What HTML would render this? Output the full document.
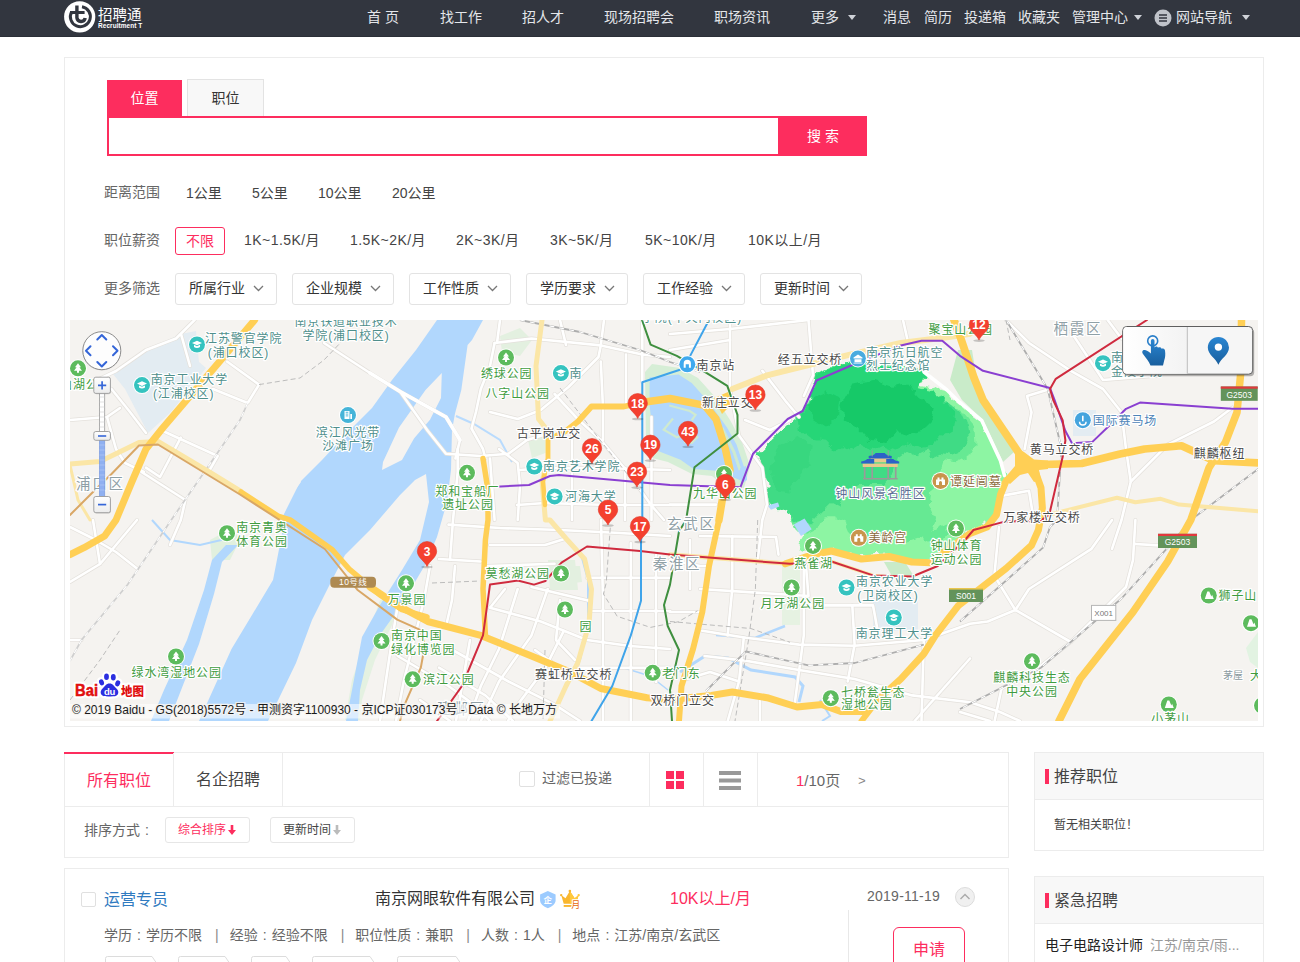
<!DOCTYPE html>
<html lang="zh-CN">
<head>
<meta charset="utf-8">
<title>招聘通 - 地图找工作</title>
<style>
*{box-sizing:border-box;margin:0;padding:0}
html,body{width:1300px;height:962px;overflow:hidden;background:#fff}
body{font-family:"Liberation Sans","Noto Sans CJK SC",sans-serif;font-size:14px;color:#333;position:relative}
.abs{position:absolute;white-space:nowrap}
#hd{position:absolute;left:0;top:0;width:1300px;height:37px;background:#32363f;border-bottom:1px solid #2b2f37}
#hd .n{position:absolute;top:0;height:35px;line-height:35px;color:#e4e6ea;font-size:14px;white-space:nowrap}
.tri{position:absolute;width:0;height:0;border-left:4px solid transparent;border-right:4px solid transparent;border-top:5px solid #cfd2d8}
#sp{position:absolute;left:64px;top:57px;width:1200px;height:670px;border:1px solid #ececec;background:#fff}
.lbl{position:absolute;font-size:14px;color:#666;line-height:20px;white-space:nowrap}
.opt{position:absolute;font-size:14px;color:#444;line-height:20px;white-space:nowrap}
.dd{position:absolute;top:273px;width:102px;height:32px;border:1px solid #e3e3e3;border-radius:3px;font-size:14px;color:#333;line-height:29px;padding-left:13px;white-space:nowrap;background:#fff}
.dd svg{position:absolute;left:77px;top:11px}
.panel{position:absolute;border:1px solid #ececec;background:#fff}
</style>
</head>
<body>
<div id="hd">
  <svg class="abs" style="left:63px;top:0px" width="34" height="34" viewBox="0 0 34 34">
    <circle cx="16.700" cy="16.900" r="15.600" fill="#fff"/>
    <path d="M19 6.800 A10 10 0 1 1 8.700 11.700" fill="none" stroke="#32363f" stroke-width="3"/>
    <path d="M13.900 5.600 V17.800 A4.200 4.200 0 0 0 22.200 18" fill="none" stroke="#32363f" stroke-width="3.400"/>
    <path d="M7 12.500 H21.600" fill="none" stroke="#32363f" stroke-width="3"/>
  </svg>
  <div class="abs" style="left:98px;top:4px;font-size:14.500px;line-height:20px;color:#fff;letter-spacing:0px;font-weight:400;font-family:'Noto Sans CJK SC',sans-serif">招聘通</div>
  <div class="abs" style="left:98px;top:21.500px;font-size:6.500px;line-height:8px;color:#fff;font-weight:bold;letter-spacing:.05px">Recruitment T</div>
  <div class="n" style="left:367px">首 页</div>
  <div class="n" style="left:440px">找工作</div>
  <div class="n" style="left:522px">招人才</div>
  <div class="n" style="left:604px">现场招聘会</div>
  <div class="n" style="left:714px">职场资讯</div>
  <div class="n" style="left:811px">更多</div>
  <div class="tri" style="left:848px;top:15px"></div>
  <div class="n" style="left:883px">消息</div>
  <div class="n" style="left:924px">简历</div>
  <div class="n" style="left:964px">投递箱</div>
  <div class="n" style="left:1018px">收藏夹</div>
  <div class="n" style="left:1072px">管理中心</div>
  <div class="tri" style="left:1134px;top:15px"></div>
  <svg class="abs" style="left:1154px;top:9px" width="18" height="18" viewBox="0 0 18 18"><circle cx="9" cy="9" r="8.5" fill="#c0c3ca"/><path d="M5 6h8M5 9h8M5 12h8" stroke="#32363f" stroke-width="1.6"/></svg>
  <div class="n" style="left:1176px">网站导航</div>
  <div class="tri" style="left:1242px;top:15px"></div>
</div>

<div id="sp"></div>
<div class="abs" style="left:107px;top:80px;width:75px;height:36px;background:#fd2d5e;color:#fff;font-size:14px;line-height:36px;text-align:center">位置</div>
<div class="abs" style="left:187px;top:79px;width:77px;height:37px;background:#f8f8f8;border:1px solid #e3e3e3;border-bottom:none;color:#333;font-size:14px;line-height:37px;text-align:center">职位</div>
<div class="abs" style="left:107px;top:116px;width:673px;height:40px;border:2px solid #fd2d5e;background:#fff"></div>
<div class="abs" style="left:779px;top:116px;width:88px;height:40px;background:#fd2d5e;color:#fff;font-size:14px;line-height:41px;text-align:center;padding-left:0">搜 索</div>

<div class="lbl" style="left:104px;top:182px">距离范围</div>
<div class="opt" style="left:186px;top:183px">1公里</div>
<div class="opt" style="left:252px;top:183px">5公里</div>
<div class="opt" style="left:318px;top:183px">10公里</div>
<div class="opt" style="left:392px;top:183px">20公里</div>

<div class="lbl" style="left:104px;top:230px">职位薪资</div>
<div class="abs" style="left:175px;top:227px;width:50px;height:28px;border:1px solid #fd2d5e;border-radius:3px;color:#fd2d5e;font-size:14px;line-height:26px;text-align:center">不限</div>
<div class="opt" style="left:244px;top:230px;letter-spacing:.45px">1K~1.5K/月</div>
<div class="opt" style="left:350px;top:230px;letter-spacing:.45px">1.5K~2K/月</div>
<div class="opt" style="left:456px;top:230px;letter-spacing:.45px">2K~3K/月</div>
<div class="opt" style="left:550px;top:230px;letter-spacing:.45px">3K~5K/月</div>
<div class="opt" style="left:645px;top:230px;letter-spacing:.45px">5K~10K/月</div>
<div class="opt" style="left:748px;top:230px;letter-spacing:.45px">10K以上/月</div>

<div class="lbl" style="left:104px;top:278px">更多筛选</div>
<div class="dd" style="left:175px">所属行业<svg width="11" height="7" viewBox="0 0 11 7"><path d="M1 1l4.5 4.5L10 1" fill="none" stroke="#777" stroke-width="1.3"/></svg></div>
<div class="dd" style="left:292px">企业规模<svg width="11" height="7" viewBox="0 0 11 7"><path d="M1 1l4.5 4.5L10 1" fill="none" stroke="#777" stroke-width="1.3"/></svg></div>
<div class="dd" style="left:409px">工作性质<svg width="11" height="7" viewBox="0 0 11 7"><path d="M1 1l4.5 4.5L10 1" fill="none" stroke="#777" stroke-width="1.3"/></svg></div>
<div class="dd" style="left:526px">学历要求<svg width="11" height="7" viewBox="0 0 11 7"><path d="M1 1l4.5 4.5L10 1" fill="none" stroke="#777" stroke-width="1.3"/></svg></div>
<div class="dd" style="left:643px">工作经验<svg width="11" height="7" viewBox="0 0 11 7"><path d="M1 1l4.5 4.5L10 1" fill="none" stroke="#777" stroke-width="1.3"/></svg></div>
<div class="dd" style="left:760px">更新时间<svg width="11" height="7" viewBox="0 0 11 7"><path d="M1 1l4.5 4.5L10 1" fill="none" stroke="#777" stroke-width="1.3"/></svg></div>
<svg class="abs" style="left:70px;top:320px" width="1188" height="401" viewBox="70 320 1188 401" font-family="'Liberation Sans','Noto Sans CJK SC',sans-serif">
<defs>
<style>
.wc{fill:none;stroke:#e4e1dc;stroke-width:4;stroke-linejoin:round;stroke-linecap:round}
.w{fill:none;stroke:#fff;stroke-width:2.6;stroke-linejoin:round;stroke-linecap:round}
.w2{fill:none;stroke:#fff;stroke-width:3.6;stroke-linejoin:round;stroke-linecap:round}
.w1{fill:none;stroke:#fff;stroke-width:1.8;stroke-linejoin:round;stroke-linecap:round}
.y{fill:none;stroke:#ffcf55;stroke-linejoin:round;stroke-linecap:round}
.yc{fill:none;stroke:#f3b94a;stroke-linejoin:round;stroke-linecap:round;opacity:.0}
.py{fill:none;stroke:#fbe6a6;stroke-linejoin:round;stroke-linecap:round}
.m{fill:none;stroke-width:2;stroke-linejoin:round;stroke-linecap:round}
.rl{fill:none;stroke:#adadad;stroke-width:1.8;stroke-linejoin:round}
.bd{fill:none;stroke:#b5b5b5;stroke-width:.9;stroke-dasharray:5 3}
.rd{fill:none;stroke:#fff;stroke-width:1.1;stroke-dasharray:5 5;stroke-linejoin:round}
.t{font-size:12px;letter-spacing:.9px;stroke:#fff;stroke-width:2.4px;paint-order:stroke;stroke-linejoin:round}
.tg{fill:#3f9c3f}.ts{fill:#4f8f8c}.tk{fill:#4a4a4a}.tb{fill:#4d84b8}.tbr{fill:#8a6a3c}.tp{fill:#5d6f95}
.td{font-size:14.5px;letter-spacing:1.7px;fill:#8fa0a6;stroke:#fff;stroke-width:2.4px;paint-order:stroke}
.cw{fill:#b1d7fd}
</style>
<linearGradient id="gbtn" x1="0" y1="0" x2="0" y2="1"><stop offset="0" stop-color="#fff"/><stop offset="1" stop-color="#ececec"/></linearGradient>
<linearGradient id="gicon" x1="0" y1="0" x2="0" y2="1"><stop offset="0" stop-color="#2a86d2"/><stop offset="1" stop-color="#195f9e"/></linearGradient>
<g id="tree"><circle r="9" fill="#fff"/><circle r="8" fill="#5dbb5d"/><path d="M0-5l3 4h-1.600l2.600 3.500h-3v2h-2v-2h-3l2.600-3.500h-1.600z" fill="#fff"/></g>
<g id="mtn"><circle r="9" fill="#fff"/><circle r="8" fill="#5dbb5d"/><path d="M-4 3.500l2.500-7.500h2l2 5 .8-1.800 1.700 4.300z" fill="#fff"/></g>
<g id="sch"><circle r="9" fill="#fff"/><circle r="8" fill="#35c3bf"/><path d="M0-3.800l5 2.300-5 2.300-5-2.300zM-3 .300l3 1.400 3-1.400v2.200q-3 2-6 0z" fill="#fff"/></g>
<g id="stn"><circle r="9" fill="#fff"/><circle r="8" fill="#3fa9ee"/><path d="M0-4.500a3.600 3.600 0 0 1 3.600 3.600v4.400h-2v-3.500h-3.200v3.500h-2v-4.400a3.600 3.600 0 0 1 3.600-3.600z" fill="#fff"/></g>
<g id="mus"><circle r="9" fill="#fff"/><circle r="8" fill="#49abdf"/><path d="M-4.500-1l4.500-3 4.500 3v1h-9zM-3.500.800h7v3h-7zM-4.500 4.200h9v.800h-9z" fill="#fff"/></g>
<g id="hist"><circle r="9" fill="#fff"/><circle r="8" fill="#c8954c"/><path d="M-4.500 4v-5.500h1.500v-2h2v2h2v-2h2v2h1.500v5.500h-3v-2.500a1.500 1.500 0 0 0-3 0v2.500z" fill="#fff"/></g>
<g id="bld"><circle r="9" fill="#fff"/><circle r="8" fill="#46b4d8"/><path d="M-3.500-4h5v8h-5zM2.300-1h1.700v5h-1.700z" fill="#fff"/><path d="M-2.300-2.800h2.600M-2.300-1h2.600M-2.300.800h2.600" stroke="#46b4d8" stroke-width=".9"/></g>
<g id="horse"><circle r="9" fill="#fff"/><circle r="8" fill="#44a4de"/><path d="M-4 1.500a4 4 0 0 0 8 0h-1.500a2.500 2.500 0 0 1-5 0zM-.8-4.500h1.600v5.500h-1.600z" fill="#fff"/></g>
<g id="mk"><ellipse cx="0" cy="1" rx="5.800" ry="1.300" fill="#000" opacity=".2"/><path d="M0 .5C-2.200-5-9.700-8.300-9.700-14.800a9.700 9.700 0 0 1 19.400 0C9.700-8.300 2.200-5 0 .5z" fill="#f4402f" stroke="#e03a2c" stroke-width=".6"/></g>
</defs>
<rect x="70" y="320" width="1188" height="401" fill="#f5f3f0"/>
<path d="M113 374 L146 350 L181 334 L196 331 L199 362 L206 368 L171 412 L148 433 L137 412 L125 389Z" fill="#e3ecf2" />
<path d="M873 598 L918 598 L918 631 L873 631Z" fill="#e3ecf2" />
<path d="M1073 410 L1096 410 L1096 436 L1073 436Z" fill="#e3ecf2" />
<path d="M958 350 L972 350 L980 400 L1014 452 L1003 462 L983 420 L962 400 L950 380Z" fill="#c9ebc9" />
<path d="M380 600 L400 596 L392 625 L375 660 L362 700 L360 720 L345 720 L352 680 L366 640Z" fill="#e4f1e1" />
<path d="M210 540 L232 528 L240 540 L230 560 L212 560Z" fill="#e1f0de" />
<path d="M500 336 L520 328 L532 340 L520 356 L502 352Z" fill="#e3f0e0" />
<path d="M528 440 L545 436 L548 452 L532 458Z" fill="#e3f0e0" />
<path d="M548 560 L575 560 L578 590 L550 590Z" fill="#e3f0e0" />
<path d="M782 565 L800 565 L800 625 L782 625Z" fill="#e6f2e2" />
<path d="M884 562 L905 562 L915 578 L893 578Z" fill="#c9ebc9" />
<path d="M1246 648 L1258 632 L1258 668 L1250 662Z" fill="#e2f3e2" />
<path d="M437 320 L483 320 L472 340 L467.6 345 L461.3 390 L455 413.5 L452 430 L451 470 L447 502 L437 537 L425 565 L415 582 L400 607 L380 635 L367 660 L360 690 L358 721 L346 721 L352 690 L362 637 L380 605 L402 570 L420 540 L429 502 L426 474 L415 480 L400 495 L370 530 L345 555 L332 580 L312 620 L296 663 L268 721 L199 721 L231.5 649 L252 615 L273 580 L282 534 L281 520 L300 482 L322 460 L350 430 L372 408 L392 380 L416 350Z" fill="#b1d7fd" />
<path d="M441.8 373 L441 398 L430 419.8 L414 438.5 L402 460 L382 470 L383 462 L399 427.6 L425.5 390Z" fill="#f5f3f0" />
<path d="M299 476 L301 482 L288 500 L276 516 L276 510 L286 492Z" fill="#f5f3f0" />
<path d="M238 545 L222 562 L214 594 L199 644 L178 698 L169 721 L151 721 L164 690 L187 640 L204 590 L212 560 L226 545Z" fill="#b1d7fd" />
<path d="M152 520 L170 540 L200 545 L230 538" fill="none" stroke="#b1d7fd" stroke-width="2"/>
<path d="M645 372 L652 364 L680 368 L698 378 L716 398 L730 420 L742 442 L750 466 L744 488 L722 484 L712 476 L692 474 L668 462 L652 458 L646 444Z" fill="#d6eed6" />
<path d="M649.6 377.4 L678.6 374.6 L691.7 383 L708.5 401.7 L717.9 414.8 L727.3 427.9 L736.6 444.7 L744 467 L740.3 480.3 L731 476.5 L719.8 471 L693.6 469 L680.5 459.7 L656.2 450.3 L652.4 429.8 L649.6 405.5Z" fill="#b1d7fd" />
<path d="M669.3 405.5 L689.8 411 L695.5 414.8 L691.7 420.4" fill="none" stroke="#cfeacf" stroke-width="2.2"/>
<path d="M673 418.5 L663.7 429.8 L676.8 437.3 L691.7 431.6 L697.3 437.3 L691.7 442.9 L684.2 441.9" fill="none" stroke="#cfeacf" stroke-width="2.2"/>
<path d="M722 428 L734 452 L740 470" fill="none" stroke="#cfeacf" stroke-width="3"/>
<path d="M566 566 L580 566 L582 582 L566 584Z" fill="#e3f0e0" />
<path d="M566 540 L582 558 L588 580 L588 625 L580 660 L572 680" fill="none" stroke="#b1d7fd" stroke-width="2"/>
<path d="M785 626 L755 638 L716 635" fill="none" stroke="#b1d7fd" stroke-width="2.5"/>
<path d="M680 672 L705 656 L728 658 L751 670 L795 677 L803 686 L799 702" fill="none" stroke="#b1d7fd" stroke-width="3"/>
<path d="M820 700 L830 716 L822 721" fill="none" stroke="#b1d7fd" stroke-width="2"/>
<path d="M624 668 L650 676 L668 690" fill="none" stroke="#b1d7fd" stroke-width="1.5"/>
<path d="M456 416 L474 424 L500 440 L512 462" fill="none" stroke="#b9dbfd" stroke-width="2"/>
<filter id="rough" x="-5%" y="-5%" width="110%" height="110%"><feTurbulence type="fractalNoise" baseFrequency="0.11" numOctaves="2" seed="7" result="n"/><feDisplacementMap in="SourceGraphic" in2="n" scale="9" xChannelSelector="R" yChannelSelector="G"/></filter>
<g filter="url(#rough)">
<path d="M852.36 361.475 L873.875 364.822 L916.907 367.213 L928.86 373.906 L919.297 385.859 L931.25 388.25 L940.813 385.859 L950.375 397.813 L962.328 407.375 L981.454 421.719 L991.016 438.453 L1000.58 462.36 L1005.36 474.313 L1000.58 493.438 L993.407 514.953 L988.625 522.125 L967.11 531.688 L955.157 541.25 L933.641 557.985 L921.688 562.766 L888.219 553.203 L854.75 555.594 L833.235 549.617 L809.328 553.203 L797.375 548.422 L804.547 536.469 L794.984 526.907 L791.399 517.344 L780.641 510.172 L768.688 503 L767.492 483.875 L761.516 464.75 L756.734 455.188 L773.469 438.453 L794.984 419.328 L809.328 400.203 L816.5 372.711 L835.625 365.539Z" fill="#8df5a3" />
<path d="M816.5 372.711 L835.625 365.539 L852.36 361.475 L873.875 364.822 L916.907 367.213 L926.469 375.102 L918.102 388.25 L931.25 390.641 L947.985 401.399 L962.328 412.156 L974.282 426.5 L975.477 445.625 L969.5 455.188 L955.157 462.36 L943.203 459.969 L938.422 474.313 L931.25 483.875 L928.86 503 L936.032 517.344 L931.25 531.688 L945.594 524.516 L950.375 534.078 L936.032 543.641 L921.688 536.469 L907.344 541.25 L888.219 536.469 L873.875 541.25 L852.36 538.86 L845.188 522.125 L835.625 517.344 L823.672 517.344 L818.891 526.907 L804.547 534.078 L794.984 525.711 L791.399 517.344 L780.641 510.172 L768.688 503 L767.492 483.875 L761.516 464.75 L756.734 455.188 L773.469 438.453 L794.984 419.328 L809.328 402.594Z" fill="#66e993" />
<path d="M816.5 372.711 L835.625 365.539 L852.36 361.475 L873.875 364.822 L916.907 367.213 L926.469 375.102 L918.102 388.25 L931.25 390.641 L947.985 401.399 L961.133 413.352 L967.11 426.5 L969.5 440.844 L962.328 450.406 L950.375 455.188 L940.813 452.797 L931.25 457.578 L926.469 450.406 L916.907 455.188 L907.344 450.406 L897.781 457.578 L893 474.313 L883.438 483.875 L859.531 483.875 L845.188 493.438 L840.406 507.781 L830.844 503 L821.281 512.563 L811.719 522.125 L799.766 522.125 L791.399 517.344 L780.641 510.172 L768.688 503 L767.492 483.875 L761.516 464.75 L756.734 455.188 L773.469 438.453 L794.984 419.328 L809.328 402.594Z" fill="#40db85" />
<path d="M817.695 373.189 L835.625 366.017 L852.36 361.953 L873.875 365.3 L916.428 367.691 L925.274 375.58 L917.385 388.25 L931.25 391.119 L946.789 402.116 L955.157 414.547 L952.766 428.891 L940.813 436.063 L931.25 445.625 L921.688 448.016 L907.344 444.43 L895.391 450.406 L883.438 445.625 L873.875 450.406 L859.531 445.625 L852.36 450.406 L845.188 445.625 L835.625 450.406 L826.063 440.844 L811.719 438.453 L799.766 428.891 L797.375 419.328 L809.328 403.789Z" fill="#27d677" />
<path d="M852.36 383.469 L873.875 379.883 L893 385.859 L907.344 383.469 L919.297 397.813 L933.641 407.375 L931.25 421.719 L921.688 431.281 L907.344 433.672 L897.781 431.281 L888.219 442.039 L869.094 439.649 L859.531 428.891 L845.188 421.719 L840.406 404.984Z" fill="#17c968" />
<path d="M811.719 397.813 L826.063 390.641 L840.406 397.813 L838.016 416.938 L826.063 426.5 L814.109 419.328 L808.133 409.766Z" fill="#1bcc6b" />
<path d="M778.25 445.625 L797.375 436.063 L811.719 445.625 L809.328 464.75 L797.375 479.094 L787.813 493.438 L775.859 491.047 L771.078 469.531Z" fill="#38d77f" />
</g>
<path d="M793.8 524.5 L804.5 518.5 L811.7 529.3 L801 536Z" fill="#b1d7fd" />
<path d="M767.5 505.4 L778 502.5 L779.4 506.6 L771 509.7Z" fill="#b1d7fd" />
<path d="M740 468 L746 466 L747 480 L741 484Z" fill="#b1d7fd" />
<path d="M194.6 320 L176 338.5 L146 350 L116 371 L93 382" class="wc" />
<path d="M181 334 L190 366" class="wc" />
<path d="M227 361.5 L259 384.6 L247.7 403 L213 389" class="wc" />
<path d="M162.3 430.8 L217.7 456 L208.5 472" class="wc" />
<path d="M180.8 437.7 L160 477 L146 467.7" class="wc" />
<path d="M141.5 472 L185.4 500 L180.8 520 L170 545" class="wc" />
<path d="M107 417 L116 449 L125 463 L144 472" class="wc" />
<path d="M93 382 L111.5 389 L130 412 L146 433" class="wc" />
<path d="M70 420 L107 417 L120 408" class="wc" />
<path d="M324 343 L370 373 L400 391.5 L446 417 L460 440 L455.4 458.5" class="wc" />
<path d="M70 527 L93 538.5 L116 552 L137 568.5" class="wc" />
<path d="M70 582 L100 564 L137 520" class="wc" />
<path d="M93 520 L100 564" class="wc" />
<path d="M70 640 L81.5 640" class="wc" />
<path d="M400 391.5 L427.7 430.8 L446 453.8 L480.8 456 L508.5 453.8 L527 440 L550 433" class="wc" />
<path d="M494.6 343 L490 366 L480.8 389 L476 412 L471.5 428.5 L483 449 L485.4 458.5" class="wc" />
<path d="M494.6 343 L531.5 338.5 L600.8 345.4 L642.3 354.6 L670 357" class="wc" />
<path d="M490 412 L517.7 419 L540.8 410 L568.5 387 L598.5 357 L600.8 345.4 L604 320" class="wc" />
<path d="M554.6 394 L577.7 419 L600.8 440 L624 467.7 L637.7 486 L651 505 L664 520" class="wc" />
<path d="M600.8 361.5 L603 407.7 L603 440" class="wc" />
<path d="M626 354.6 L626 403" class="wc" />
<path d="M642.3 320 L642.3 382" class="wc" />
<path d="M651.5 417 L651.5 520" class="wc" />
<path d="M499 449 L517.7 463 L520 486 L517.7 520" class="wc" />
<path d="M457.7 449 L457.7 472 L453 520 L450 560" class="wc" />
<path d="M490 458.5 L494.6 520" class="wc" />
<path d="M520 470 L545 468 L600 468 L670 470" class="wc" />
<path d="M517 505 L545 503 L608 505 L670 505" class="wc" />
<path d="M572 431 L572 520" class="wc" />
<path d="M625 468 L625 520" class="wc" />
<path d="M500 320 L497 343" class="wc" />
<path d="M560 320 L566 345" class="wc" />
<path d="M448.5 524.6 L500 528 L560 530 L620 533 L670 536" class="wc" />
<path d="M439 559 L480.8 561.5" class="wc" />
<path d="M487.7 566 L554.6 563.8" class="wc" />
<path d="M490 545 L545 545 L566 538.5" class="wc" />
<path d="M531.5 587 L589 600.8" class="wc" />
<path d="M490 607.7 L540.8 621.5 L587 640 L630 646 L670 649" class="wc" />
<path d="M517.7 589 L499 649 L480.8 686 L468 721" class="wc" />
<path d="M547.7 589 L531.5 635.4 L499 681.5 L480.8 721" class="wc" />
<path d="M563.8 630.8 L545.4 667.7 L517.7 704.6 L508 721" class="wc" />
<path d="M450.8 649 L508.5 681.5 L554.6 704.6 L580 721" class="wc" />
<path d="M439 667.7 L485.4 695.4 L513 721" class="wc" />
<path d="M397.7 656 L448.5 686 L473.8 704.6 L490 721" class="wc" />
<path d="M420 700 L450 721" class="wc" />
<path d="M397 610 L392 640 L386 680 L380 721" class="wc" />
<path d="M430 566 L424 600 L414 640 L404 680 L396 721" class="wc" />
<path d="M455 566 L452 600 L447 622" class="wc" />
<path d="M470 640 L462 686 L456 721" class="wc" />
<path d="M505 589 L490 607.7" class="wc" />
<path d="M601 520 L603 600 L603 721" class="wc" />
<path d="M630.8 543 L630.8 721" class="wc" />
<path d="M656 555 L656 682" class="wc" />
<path d="M587 577.7 L670 577.7" class="wc" />
<path d="M592 611 L670 611" class="wc" />
<path d="M577.7 667.7 L670 667.7" class="wc" />
<path d="M560 600 L556 640 L575 660" class="wc" />
<path d="M535 650 L560 668" class="wc" />
<path d="M670 334 L730 329 L808.5 320" class="wc" />
<path d="M730 320 L730 389 L739 435.4 L762.3 467.7 L767 504.6 L762.3 520 L757.7 560" class="wc" />
<path d="M762.3 370.8 L785.4 400.8 L799 417" class="wc" />
<path d="M808.5 320 L813 375.4 L803.8 396" class="wc" />
<path d="M903 320 L907.7 340.8" class="wc" />
<path d="M670 504.6 L716 504.6" class="wc" />
<path d="M670 350 L700 345 L730 340" class="wc" />
<path d="M745 420 L770 430 L790 420" class="wc" />
<path d="M700 536 L776 537 L778.5 554.6" class="wc" />
<path d="M732.3 536 L732.3 589 L727.7 635.4" class="wc" />
<path d="M700 589 L808.5 596 L806 566" class="wc" />
<path d="M803.8 566 L803.8 635.4 L794.6 704.6" class="wc" />
<path d="M808.5 605.4 L873 605.4 L877.7 630.8" class="wc" />
<path d="M852.3 605.4 L854.6 644.6 L847.7 681.5" class="wc" />
<path d="M702.3 630.8 L746 637.7 L799 644.6 L854.6 645.8 L923.8 640 L970 623.8 L987.7 621.5 L1015.4 610" class="wc" />
<path d="M743.8 637.7 L739 681.5 L727.7 721" class="wc" />
<path d="M704.6 656 L746 660.8 L799 670 L854.6 679 L912.3 695.4 L970 702.3 L1000 712 L1020 721" class="wc" />
<path d="M923.8 640 L921.5 721" class="wc" />
<path d="M970 658.5 L914.6 721" class="wc" />
<path d="M670 560 L700 566 L709 566" class="wc" />
<path d="M670 612 L702 612" class="wc" />
<path d="M683 680 L710 672 L739 681.5" class="wc" />
<path d="M690 540 L690 589" class="wc" />
<path d="M760 700 L760 721" class="wc" />
<path d="M1006 320 L1029 343 L1070.8 370.8 L1103 389 L1121.5 412.3 L1126 449 L1130.8 481.5 L1121.5 520 L1112 548.8" class="wc" />
<path d="M1050 389 L1027 396 L1031.5 412.3 L1024.6 449" class="wc" />
<path d="M1070.8 331.5 L1103 380 L1158.5 375.4" class="wc" />
<path d="M1107.7 320 L1121.5 338.5" class="wc" />
<path d="M1130.8 481.5 L1167.7 444.6 L1214 421.5 L1232.3 407.7" class="wc" />
<path d="M1003.8 495.4 L1029 490.8 L1033.8 520" class="wc" />
<path d="M1010 475 L1030 470" class="wc" />
<path d="M1135.4 520 L1133 560 L1126 587 L1070.8 642 L1038.5 667.7 L1001.5 688.5 L994.6 721" class="wc" />
<path d="M1112 520 L1091.5 548.8 L1029 589 L1015.4 610" class="wc" />
<path d="M997 580 L1015.4 610 L1070.8 642" class="wc" />
<path d="M999 527 L994.6 573" class="wc" />
<path d="M1135.4 544 L1158.5 545.4" class="wc" />
<path d="M960 712 L990 721" class="wc" />
<path d="M194.6 320 L176 338.5 L146 350 L116 371 L93 382" class="w" />
<path d="M181 334 L190 366" class="w" />
<path d="M227 361.5 L259 384.6 L247.7 403 L213 389" class="w" />
<path d="M162.3 430.8 L217.7 456 L208.5 472" class="w" />
<path d="M180.8 437.7 L160 477 L146 467.7" class="w" />
<path d="M141.5 472 L185.4 500 L180.8 520 L170 545" class="w" />
<path d="M107 417 L116 449 L125 463 L144 472" class="w" />
<path d="M93 382 L111.5 389 L130 412 L146 433" class="w" />
<path d="M70 420 L107 417 L120 408" class="w" />
<path d="M324 343 L370 373 L400 391.5 L446 417 L460 440 L455.4 458.5" class="w" />
<path d="M70 527 L93 538.5 L116 552 L137 568.5" class="w" />
<path d="M70 582 L100 564 L137 520" class="w" />
<path d="M93 520 L100 564" class="w" />
<path d="M70 640 L81.5 640" class="w" />
<path d="M400 391.5 L427.7 430.8 L446 453.8 L480.8 456 L508.5 453.8 L527 440 L550 433" class="w" />
<path d="M494.6 343 L490 366 L480.8 389 L476 412 L471.5 428.5 L483 449 L485.4 458.5" class="w" />
<path d="M494.6 343 L531.5 338.5 L600.8 345.4 L642.3 354.6 L670 357" class="w" />
<path d="M490 412 L517.7 419 L540.8 410 L568.5 387 L598.5 357 L600.8 345.4 L604 320" class="w" />
<path d="M554.6 394 L577.7 419 L600.8 440 L624 467.7 L637.7 486 L651 505 L664 520" class="w" />
<path d="M600.8 361.5 L603 407.7 L603 440" class="w" />
<path d="M626 354.6 L626 403" class="w" />
<path d="M642.3 320 L642.3 382" class="w" />
<path d="M651.5 417 L651.5 520" class="w" />
<path d="M499 449 L517.7 463 L520 486 L517.7 520" class="w" />
<path d="M457.7 449 L457.7 472 L453 520 L450 560" class="w" />
<path d="M490 458.5 L494.6 520" class="w" />
<path d="M520 470 L545 468 L600 468 L670 470" class="w" />
<path d="M517 505 L545 503 L608 505 L670 505" class="w" />
<path d="M572 431 L572 520" class="w" />
<path d="M625 468 L625 520" class="w" />
<path d="M500 320 L497 343" class="w" />
<path d="M560 320 L566 345" class="w" />
<path d="M448.5 524.6 L500 528 L560 530 L620 533 L670 536" class="w" />
<path d="M439 559 L480.8 561.5" class="w" />
<path d="M487.7 566 L554.6 563.8" class="w" />
<path d="M490 545 L545 545 L566 538.5" class="w" />
<path d="M531.5 587 L589 600.8" class="w" />
<path d="M490 607.7 L540.8 621.5 L587 640 L630 646 L670 649" class="w" />
<path d="M517.7 589 L499 649 L480.8 686 L468 721" class="w" />
<path d="M547.7 589 L531.5 635.4 L499 681.5 L480.8 721" class="w" />
<path d="M563.8 630.8 L545.4 667.7 L517.7 704.6 L508 721" class="w" />
<path d="M450.8 649 L508.5 681.5 L554.6 704.6 L580 721" class="w" />
<path d="M439 667.7 L485.4 695.4 L513 721" class="w" />
<path d="M397.7 656 L448.5 686 L473.8 704.6 L490 721" class="w" />
<path d="M420 700 L450 721" class="w" />
<path d="M397 610 L392 640 L386 680 L380 721" class="w" />
<path d="M430 566 L424 600 L414 640 L404 680 L396 721" class="w" />
<path d="M455 566 L452 600 L447 622" class="w" />
<path d="M470 640 L462 686 L456 721" class="w" />
<path d="M505 589 L490 607.7" class="w" />
<path d="M601 520 L603 600 L603 721" class="w" />
<path d="M630.8 543 L630.8 721" class="w" />
<path d="M656 555 L656 682" class="w" />
<path d="M587 577.7 L670 577.7" class="w" />
<path d="M592 611 L670 611" class="w" />
<path d="M577.7 667.7 L670 667.7" class="w" />
<path d="M560 600 L556 640 L575 660" class="w" />
<path d="M535 650 L560 668" class="w" />
<path d="M670 334 L730 329 L808.5 320" class="w" />
<path d="M730 320 L730 389 L739 435.4 L762.3 467.7 L767 504.6 L762.3 520 L757.7 560" class="w" />
<path d="M762.3 370.8 L785.4 400.8 L799 417" class="w" />
<path d="M808.5 320 L813 375.4 L803.8 396" class="w" />
<path d="M903 320 L907.7 340.8" class="w" />
<path d="M670 504.6 L716 504.6" class="w" />
<path d="M670 350 L700 345 L730 340" class="w" />
<path d="M745 420 L770 430 L790 420" class="w" />
<path d="M700 536 L776 537 L778.5 554.6" class="w" />
<path d="M732.3 536 L732.3 589 L727.7 635.4" class="w" />
<path d="M700 589 L808.5 596 L806 566" class="w" />
<path d="M803.8 566 L803.8 635.4 L794.6 704.6" class="w" />
<path d="M808.5 605.4 L873 605.4 L877.7 630.8" class="w" />
<path d="M852.3 605.4 L854.6 644.6 L847.7 681.5" class="w" />
<path d="M702.3 630.8 L746 637.7 L799 644.6 L854.6 645.8 L923.8 640 L970 623.8 L987.7 621.5 L1015.4 610" class="w" />
<path d="M743.8 637.7 L739 681.5 L727.7 721" class="w" />
<path d="M704.6 656 L746 660.8 L799 670 L854.6 679 L912.3 695.4 L970 702.3 L1000 712 L1020 721" class="w" />
<path d="M923.8 640 L921.5 721" class="w" />
<path d="M970 658.5 L914.6 721" class="w" />
<path d="M670 560 L700 566 L709 566" class="w" />
<path d="M670 612 L702 612" class="w" />
<path d="M683 680 L710 672 L739 681.5" class="w" />
<path d="M690 540 L690 589" class="w" />
<path d="M760 700 L760 721" class="w" />
<path d="M1006 320 L1029 343 L1070.8 370.8 L1103 389 L1121.5 412.3 L1126 449 L1130.8 481.5 L1121.5 520 L1112 548.8" class="w" />
<path d="M1050 389 L1027 396 L1031.5 412.3 L1024.6 449" class="w" />
<path d="M1070.8 331.5 L1103 380 L1158.5 375.4" class="w" />
<path d="M1107.7 320 L1121.5 338.5" class="w" />
<path d="M1130.8 481.5 L1167.7 444.6 L1214 421.5 L1232.3 407.7" class="w" />
<path d="M1003.8 495.4 L1029 490.8 L1033.8 520" class="w" />
<path d="M1010 475 L1030 470" class="w" />
<path d="M1135.4 520 L1133 560 L1126 587 L1070.8 642 L1038.5 667.7 L1001.5 688.5 L994.6 721" class="w" />
<path d="M1112 520 L1091.5 548.8 L1029 589 L1015.4 610" class="w" />
<path d="M997 580 L1015.4 610 L1070.8 642" class="w" />
<path d="M999 527 L994.6 573" class="w" />
<path d="M1135.4 544 L1158.5 545.4" class="w" />
<path d="M960 712 L990 721" class="w" />
<path d="M924 372 L947 390 L960 402.7 L981.6 420.3 L1000.5 460.8 L1004.6 475.7" class="w2" />
<path d="M370 373 L400 391.5 L446 417 L460 440" class="w2" />
<path d="M1006 320 L1047.7 389 L1061.5 449 L1057 520 L1050 527 L1043 547.7 L960 621.5" class="rl" />
<path d="M1006 320 L1047.7 389 L1061.5 449 L1057 520 L1050 527 L1043 547.7 L960 621.5" class="rd" />
<path d="M1260 467.7 L1190.8 520 L1167.7 547.7 L1121.5 598.5 L1040.8 667.7 L960 709" class="rl" />
<path d="M1260 467.7 L1190.8 520 L1167.7 547.7 L1121.5 598.5 L1040.8 667.7 L960 709" class="rd" />
<path d="M706 691 L733.5 663.4 L746 651.5 L808.5 665.4 L854.6 663 L923.8 644.6" class="rl" />
<path d="M706 691 L733.5 663.4 L746 651.5 L808.5 665.4 L854.6 663 L923.8 644.6" class="rd" />
<path d="M520 320 L580 332 L640 350 L670 362 L700 372" class="rl" />
<path d="M520 320 L580 332 L640 350 L670 362 L700 372" class="rd" />
<path d="M247.7 403 L240 420 L208.5 466 L176 513 L127.7 584.6 L81.5 640 L70 660.8" fill="none" stroke="#cfcfcf" stroke-width="1.7"/>
<path d="M247.7 403 L240 420 L208.5 466 L176 513 L127.7 584.6 L81.5 640 L70 660.8" class="rd" />
<path d="M757.7 520 L755.4 589 L748.5 640 L735 721" class="bd" />
<path d="M670 621.5 L750.8 628.5 L790 642.3" class="bd" />
<path d="M610.3 527.7 L606.2 583 L603.4 594 L617.2 616.3 L650.5 627.4 L678.2 621.8 L697.5 610.8" class="bd" />
<path d="M432 583 L480 581" class="bd" />
<path d="M259 384.6 L300 378 L324 360 L345 338" class="bd" />
<path d="M70 700 L100 660 L120 630" class="bd" />
<path d="M1006 320 L1010 340" class="bd" />
<path d="M560 388 L600 440 L640 490" class="bd" />
<path d="M545 650 L543 721" class="bd" />
<path d="M70 464 L100 461.5 L139 442.5 L158 441.5 L208.5 471.5 L241 491.5" class="py" stroke-width="5"/>
<path d="M70 465 L78 500 L90 520" class="py" stroke-width="3"/>
<path d="M542 320 L536 366 L538.5 419 L548 431 L548 458.5 L542 481.5 L545.4 520 L550 520 L566 538.5 L584.6 559 L591.5 589 L589 624 L577.7 663 L566 686 L550 721" class="py" stroke-width="5"/>
<path d="M732.3 389 L767 375.4 L808.5 365 L850 354.6 L900.8 343 L947 337.3 L970 333.8" class="py" stroke-width="6"/>
<path d="M1052 514 L1117 497.7 L1135.4 502.3 L1160.8 498.8 L1179 504.6 L1260 511.5" class="py" stroke-width="4"/>
<path d="M670 554.6 L790 563.8" class="py" stroke-width="4.5"/>
<path d="M831.5 561.5 L873 575.4 L890 577" class="py" stroke-width="3.5"/>
<path d="M254.6 320 L217.7 363.8 L162.3 428.5 L146 449 L132 481.5 L116 520 L104.6 536 L84 547.7 L70 554.6" class="y" stroke-width="7"/>
<path d="M241 492 L278 516 L290 519.8 L332.3 549.7 L349.8 569.7 L379.7 594.7 L402 609.6 L427 617" class="y" stroke-width="5.5"/>
<path d="M370 587 L397.7 605.4 L427.7 621.5 L480.8 635.4 L531.5 656 L570.8 672.3 L600.8 688.5 L647 697.7 L670 699.5 L711.5 695.4 L732.3 692 L767 697.7 L797 707 L822.3 704.6 L840.8 711.5 L866 711.5 L877.7 700 L900.8 679 L923.8 653.8 L935.4 635.4 L958.5 605.4 L1006 568.5 L1031.5 545.4 L1038.4 530 L1042.4 508 L1041 487.8 L1035.7 473 L1030 466" class="y" stroke-width="7"/>
<path d="M483 458.5 L488 490 L488 520 L485.4 540 L483 589 L485.4 635.4" class="y" stroke-width="5.5"/>
<path d="M548 431 L548 458.5 L543 481.5 L545 505" class="y" stroke-width="4.5"/>
<path d="M556 436 L566 431 L578 421.5 L591.5 406.5 L624 406.5 L645 402" class="y" stroke-width="5.8"/>
<path d="M645 402 L670 398.5 L704.6 405.4 L716 419 L725.4 449 L730 470 L723 495.4 L719 520" class="y" stroke-width="7.5"/>
<path d="M719 520 L709 566 L702.3 612 L693 649 L681.5 686 L679 721" class="y" stroke-width="6"/>
<path d="M954 320 L960.8 338.5 L974 377.7 L983 400 L1019.5 454 L1027.6 464.9" class="y" stroke-width="7.8"/>
<path d="M1027.6 464.9 L1081.6 463.5 L1120 454 L1144.6 449 L1181.5 445.8 L1214 460.8 L1260 463" class="y" stroke-width="7.6"/>
<path d="M1022 468 L1006 481 L1000.5 494.6 L996.5 514.9 L987 527 L970 533.5 L947 550 L930.8 562.7 L912 562 L889 556.5 L861.5 559 L831.5 551 L813 554.6 L785.4 563.8" class="y" stroke-width="7"/>
<path d="M1241.5 320 L1241 370 L1237 412.3 L1225.4 442.3 L1209 467.7 L1190.8 520 L1167.7 561.5 L1133 612 L1080 679 L1059 721" class="y" stroke-width="7.5"/>
<path d="M861.5 721 L877.7 700" class="y" stroke-width="6"/>
<path d="M1015 447 L1024 452 L1034 459.500 L1048 460.500 L1048 469 L1039 470 L1041 480 L1034 482 L1028 473 L1020 475 L1010 484 L1004 479 L1015 466z" fill="#ffcf55"/>
<path d="M714 398 L728 392 L732 404 L722 414z" fill="#ffcf55"/>
<path d="M70 515 L95 490 L111.5 474 L139 445.5 L158 444.5 L240 494.5 L324.8 549 L357.3 589.7 L397.2 619.6 L419.6 629.6 L425 644.6 L420.8 667.7 L404.6 704.6 L400 721" class="m" stroke="#d9a766" stroke-width="1.6"/>
<path d="M491 487 L529 485 L550 476 L559 475 L670 485 L740.4 487.3 L753 453.8 L787.7 419 L802.7 411 L816.5 380.5 L852.3 365 L900.8 345.4 L921.5 340.8 L942.3 340.8 L960 355.8 L983 370.8 L1050 388 L1054.6 400 L1065.4 431 L1072 443.2 L1092.4 441.9 L1110 425 L1126 408.8 L1140 402.6 L1232.3 408.8 L1260 408.8" class="m" stroke="#8a3fd1"/>
<path d="M1147 320 L1055.8 378.8 L1050 389 L1053.2 400 L1062.7 420.3 L1065.4 440.5 L1062.7 456.8 L1049.2 514.9 L1040 521 L1004.6 521.6 L973.5 530 L965 540 L937.7 566 L912.3 576.5 L873 575.4 L831.5 561.5 L790 563.8 L670 554.6 L640 551 L587 546.5 L561.5 562.7 L545.4 581 L534 584.6 L517.7 580.5 L490 584.6 L483 635.4 L462 686 L437 721" class="m" stroke="#cf2a3e"/>
<path d="M642 320 L650.6 344.7 L676.8 355.9 L704.8 371.8 L727.3 385.8 L737.5 414.8 L737.5 433.5 L694.5 467.2 L686.1 520 L679 531.5 L670 584.6 L664 605 L667.7 626 L679 650 L670 690 L672 721" class="m" stroke="#3f8f3f"/>
<path d="M709 320 L690.8 354.6 L683.8 368.5 L670 373 L642.3 382.3 L642.3 520 L641 542 L641 600.8 L630.8 635.4 L612.3 686 L591.5 721" class="m" stroke="#3fa4ea"/>
<text class="td" x="76" y="488.8">浦口区</text>
<text class="td" x="667" y="529.3">玄武区</text>
<text class="td" x="652.7" y="568.5">秦淮区</text>
<text class="td" x="1053.5" y="333.8">栖霞区</text>
<text class="td" x="437" y="713.8">建邺区</text>
<use href="#sch" x="197" y="344.5"/>
<text class="t ts" x="243.7" y="343.3" text-anchor="middle" >江苏警官学院</text>
<text class="t ts" x="238.5" y="357.1" text-anchor="middle" >(浦口校区)</text>
<use href="#sch" x="142" y="385.1"/>
<text class="t ts" x="189.4" y="383.6" text-anchor="middle" >南京工业大学</text>
<text class="t ts" x="183.6" y="397.5" text-anchor="middle" >(江浦校区)</text>
<text class="t ts" x="346" y="326.3" text-anchor="middle" >南京铁道职业技术</text>
<text class="t ts" x="346" y="339.8" text-anchor="middle" >学院(浦口校区)</text>
<use href="#bld" x="348" y="415.1"/>
<text class="t ts" x="348" y="436.8" text-anchor="middle" >滨江风光带</text>
<text class="t ts" x="348" y="449.8" text-anchor="middle" >沙滩广场</text>
<use href="#tree" x="78" y="368.3"/>
<text class="t tg" x="60" y="389.4" text-anchor="start" >山湖公</text>
<use href="#tree" x="227" y="533.2"/>
<text class="t tg" x="262" y="531.8" text-anchor="middle" >南京青奥</text>
<text class="t tg" x="262" y="545.6" text-anchor="middle" >体育公园</text>
<use href="#tree" x="176" y="656.5"/>
<text class="t tg" x="176.7" y="677.1" text-anchor="middle" >绿水湾湿地公园</text>
<use href="#tree" x="506" y="357.5"/>
<text class="t tg" x="506.7" y="378.3" text-anchor="middle" >绣球公园</text>
<text class="t tg" x="517.7" y="398.2" text-anchor="middle" >八字山公园</text>
<use href="#sch" x="560.9" y="373.1"/>
<text class="t ts" x="569.6" y="378.3" text-anchor="start" >南</text>
<text class="t tk" x="549" y="437.8" text-anchor="middle" >古平岗立交</text>
<use href="#sch" x="534.3" y="466.5"/>
<text class="t ts" x="543" y="471.3" text-anchor="start" >南京艺术学院</text>
<use href="#sch" x="554.6" y="496.4"/>
<text class="t ts" x="565" y="501.3" text-anchor="start" >河海大学</text>
<use href="#tree" x="467" y="472.8"/>
<text class="t tg" x="467.5" y="495.6" text-anchor="middle" >郑和宝船厂</text>
<text class="t tg" x="468" y="508.8" text-anchor="middle" >遗址公园</text>
<use href="#tree" x="561" y="573.5"/>
<text class="t tg" x="550" y="578.3" text-anchor="end" >莫愁湖公园</text>
<use href="#tree" x="406" y="583.3"/>
<text class="t tg" x="407" y="604.4" text-anchor="middle" >万景园</text>
<use href="#tree" x="381.5" y="641"/>
<text class="t tg" x="391" y="639.5" text-anchor="start" >南京中国</text>
<text class="t tg" x="391" y="653.8" text-anchor="start" >绿化博览园</text>
<use href="#tree" x="412.7" y="679.3"/>
<text class="t tg" x="423" y="683.8" text-anchor="start" >滨江公园</text>
<text class="t tk" x="573.7" y="679.4" text-anchor="middle" >赛虹桥立交桥</text>
<use href="#tree" x="652.7" y="672.8"/>
<text class="t tg" x="662" y="678.3" text-anchor="start" >老门东</text>
<text class="t tk" x="650.4" y="704.8" text-anchor="start" >双桥门立交</text>
<use href="#tree" x="565" y="609.5"/>
<text class="t tg" x="579.5" y="630.8" text-anchor="start" >园</text>
<text class="t ts" x="692" y="322.3" text-anchor="middle" >学院(中央门校区)</text>
<use href="#stn" x="687.3" y="364.3"/>
<text class="t tk" x="696.5" y="369.8" text-anchor="start" >南京站</text>
<text class="t tk" x="810" y="363.8" text-anchor="middle" >经五立交桥</text>
<use href="#mus" x="858" y="358.5"/>
<text class="t ts" x="866" y="357.1" text-anchor="start" >南京抗日航空</text>
<text class="t ts" x="866" y="369.8" text-anchor="start" >烈士纪念馆</text>
<text class="t tg" x="928.5" y="333.8" text-anchor="start" >聚宝山公园</text>
<text class="t tk" x="702" y="406.8" text-anchor="start" >新庄立交</text>
<use href="#tree" x="724" y="474"/>
<text class="t tg" x="693" y="497.8" text-anchor="start" >九华山公园</text>
<text class="t tp" x="880.5" y="497.8" text-anchor="middle" >钟山风景名胜区</text>
<use href="#hist" x="940.5" y="480.9"/>
<text class="t tbr" x="950" y="486.3" text-anchor="start" >谭延闿墓</text>
<use href="#hist" x="858.8" y="537.8"/>
<text class="t tbr" x="868.5" y="542.1" text-anchor="start" >美龄宫</text>
<use href="#tree" x="813" y="545.9"/>
<text class="t tg" x="813.6" y="567.5" text-anchor="middle" >燕雀湖</text>
<use href="#tree" x="791.6" y="587.5"/>
<text class="t tg" x="792.8" y="607.8" text-anchor="middle" >月牙湖公园</text>
<use href="#sch" x="846.5" y="587.5"/>
<text class="t ts" x="856" y="585.8" text-anchor="start" >南京农业大学</text>
<text class="t ts" x="888" y="599.8" text-anchor="middle" >(卫岗校区)</text>
<use href="#sch" x="893.8" y="617.5"/>
<text class="t ts" x="894.4" y="638.3" text-anchor="middle" >南京理工大学</text>
<use href="#tree" x="830.8" y="698.2"/>
<text class="t tg" x="841" y="696.8" text-anchor="start" >七桥瓮生态</text>
<text class="t tg" x="841" y="709.4" text-anchor="start" >湿地公园</text>
<use href="#tree" x="956" y="528.5"/>
<text class="t tg" x="956.5" y="550.2" text-anchor="middle" >钟山体育</text>
<text class="t tg" x="956.5" y="563.8" text-anchor="middle" >运动公园</text>
<use href="#horse" x="1082.8" y="420.2"/>
<text class="t tb" x="1092.7" y="425.2" text-anchor="start" >国际赛马场</text>
<text class="t tk" x="1062" y="453.8" text-anchor="middle" >黄马立交桥</text>
<text class="t tk" x="1219.6" y="457.5" text-anchor="middle" >麒麟枢纽</text>
<text class="t tk" x="1042" y="521.6" text-anchor="middle" >万家楼立交桥</text>
<use href="#sch" x="1103" y="363.2"/>
<text class="t ts" x="1111" y="361.8" text-anchor="start" >南京财经</text>
<text class="t ts" x="1111" y="375.6" text-anchor="start" >金陵学院</text>
<use href="#mtn" x="1208.8" y="595.5"/>
<text class="t tg" x="1218.5" y="599.8" text-anchor="start" >狮子山</text>
<use href="#mtn" x="1251" y="623.2"/>
<use href="#mtn" x="1168.8" y="704.5"/>
<text class="t tg" x="1170.6" y="723.3" text-anchor="middle" >小茅山</text>
<use href="#tree" x="1032" y="661.3"/>
<text class="t tg" x="1032" y="682.4" text-anchor="middle" >麒麟科技生态</text>
<text class="t tg" x="1032" y="695.8" text-anchor="middle" >中央公园</text>
<text x="1223" y="678.5" font-size="10" fill="#8a9aa0" stroke="#fff" stroke-width="2" paint-order="stroke">茅屋</text>
<text class="t tg" x="1250" y="679.8" text-anchor="start" >大</text>
<use href="#mtn" x="1262" y="705.5"/>
<rect x="1220.8" y="386.5" width="36.9" height="14.3" fill="#63935a"/>
<rect x="1220.8" y="386.5" width="36.9" height="2.2" fill="#e2383d"/>
<text x="1239.25" y="397.65" font-size="8.5" fill="#fff" text-anchor="middle">G2503</text>
<rect x="1158" y="533.8" width="39" height="14.2" fill="#63935a"/>
<rect x="1158" y="533.8" width="39" height="2.2" fill="#e2383d"/>
<text x="1177.5" y="544.9" font-size="8.5" fill="#fff" text-anchor="middle">G2503</text>
<rect x="949" y="588" width="34" height="14" fill="#63935a"/>
<rect x="949" y="588" width="34" height="1.6" fill="#e9c650"/>
<text x="966" y="598.6" font-size="8.5" fill="#fff" text-anchor="middle">S001</text>
<rect x="1091.5" y="605.4" width="24.3" height="15" fill="#fff" stroke="#b5b5b5" stroke-width="1"/>
<text x="1103.65" y="615.9" font-size="8" fill="#777" text-anchor="middle">X001</text>
<rect x="330.3" y="576.7" width="45.7" height="11" rx="4" fill="#ae8a52"/>
<text x="353.15" y="585.4" font-size="8.5" fill="#fff" text-anchor="middle" letter-spacing=".5">10号线</text>
<g transform="translate(860.7 450.4)">
<path d="M5 9.500h29v19.500h-29z" fill="none"/>
<path d="M2.500 28.300h34.500" stroke="#9a9a9a" stroke-width="1.400"/>
<path d="M4 14v14M11.500 14v14M27.500 14v14M35 14v14" stroke="#9a9a9a" stroke-width="1.700"/>
<path d="M17.500 12v16M21.500 12v16" stroke="#b9b9b9" stroke-width="1.200" opacity=".0"/>
<path d="M2 13.200h35v3.300h-35z" fill="#e9c98c"/>
<path d="M10 7.500h19v4.500h-19z" fill="#e9c98c"/>
<path d="M8 5.500c4-.3 6-1.500 7-3h9c1 1.500 3 2.700 7 3v2.700h-23z" fill="#2c62c7"/>
<path d="M.500 11c3-.3 5-1 6-2.300h7v4.300h-13z" fill="#2c62c7"/>
<path d="M38.500 11c-3-.3-5-1-6-2.300h-7v4.300h13z" fill="#2c62c7"/>
<path d="M11.500 0v6M27.500 0v6" stroke="#9a9a9a" stroke-width="1"/>
</g>
<use href="#mk" x="637.7" y="418"/><text x="637.7" y="407.8" font-size="12" font-weight="bold" fill="#fff" text-anchor="middle" font-family="'Liberation Sans',sans-serif">18</text>
<use href="#mk" x="592" y="463"/><text x="592" y="452.8" font-size="12" font-weight="bold" fill="#fff" text-anchor="middle" font-family="'Liberation Sans',sans-serif">26</text>
<use href="#mk" x="650.4" y="459.6"/><text x="650.4" y="449.4" font-size="12" font-weight="bold" fill="#fff" text-anchor="middle" font-family="'Liberation Sans',sans-serif">19</text>
<use href="#mk" x="637" y="486.6"/><text x="637" y="476.4" font-size="12" font-weight="bold" fill="#fff" text-anchor="middle" font-family="'Liberation Sans',sans-serif">23</text>
<use href="#mk" x="608" y="524.5"/><text x="608" y="514.3" font-size="12" font-weight="bold" fill="#fff" text-anchor="middle" font-family="'Liberation Sans',sans-serif">5</text>
<use href="#mk" x="640" y="541"/><text x="640" y="530.8" font-size="12" font-weight="bold" fill="#fff" text-anchor="middle" font-family="'Liberation Sans',sans-serif">17</text>
<use href="#mk" x="427" y="566"/><text x="427" y="555.8" font-size="12" font-weight="bold" fill="#fff" text-anchor="middle" font-family="'Liberation Sans',sans-serif">3</text>
<use href="#mk" x="755.4" y="409.5"/><text x="755.4" y="399.3" font-size="12" font-weight="bold" fill="#fff" text-anchor="middle" font-family="'Liberation Sans',sans-serif">13</text>
<use href="#mk" x="688" y="445.8"/><text x="688" y="435.6" font-size="12" font-weight="bold" fill="#fff" text-anchor="middle" font-family="'Liberation Sans',sans-serif">43</text>
<use href="#mk" x="725.4" y="498.8"/><text x="725.4" y="488.6" font-size="12" font-weight="bold" fill="#fff" text-anchor="middle" font-family="'Liberation Sans',sans-serif">6</text>
<use href="#mk" x="979" y="339.6"/><text x="979" y="329.4" font-size="12" font-weight="bold" fill="#fff" text-anchor="middle" font-family="'Liberation Sans',sans-serif">12</text>
<g>
<circle cx="101.800" cy="351.200" r="19.300" fill="#000" opacity=".12"/>
<circle cx="101.800" cy="350.700" r="19" fill="#fdfdfd" stroke="#8d8d8d" stroke-width="1"/>
<g fill="none" stroke="#3566d8" stroke-width="2" stroke-linecap="round" stroke-linejoin="round">
<path d="M97.300 339.500l4.500-4.500 4.500 4.500M97.300 362l4.500 4.500 4.500-4.500M90.500 346.200l-4.500 4.500 4.500 4.500M113 346.200l4.500 4.500-4.500 4.500"/></g>
<rect x="99.500" y="392" width="5.200" height="40" fill="#fff" stroke="#999" stroke-width=".8"/>
<path d="M99.500 397h5.200M99.500 402h5.200M99.500 407h5.200M99.500 412h5.200M99.500 417h5.200M99.500 422h5.200M99.500 427h5.200" stroke="#ccc" stroke-width=".6"/>
<rect x="99.500" y="440" width="5.200" height="57" fill="#8fb0f1" stroke="#7f9fe0" stroke-width=".8"/>
<path d="M99.500 445h5.200M99.500 450h5.200M99.500 455h5.200M99.500 460h5.200M99.500 465h5.200M99.500 470h5.200M99.500 475h5.200M99.500 480h5.200M99.500 485h5.200M99.500 490h5.200" stroke="#b9cdf7" stroke-width=".6"/>
<rect x="94.500" y="378.200" width="16.400" height="16" rx="2" fill="#000" opacity=".15"/>
<rect x="93.800" y="377.200" width="16.600" height="16.200" rx="2" fill="url(#gbtn)" stroke="#9a9a9a" stroke-width=".9"/>
<path d="M98 385.300h8.200M102.100 381.200v8.200" stroke="#3566d8" stroke-width="1.700"/>
<rect x="93.800" y="431.500" width="16.600" height="8.800" rx="2" fill="url(#gbtn)" stroke="#9a9a9a" stroke-width=".9"/>
<path d="M98 436h8.200" stroke="#3566d8" stroke-width="1.600"/>
<rect x="94.500" y="497.500" width="16.400" height="16" rx="2" fill="#000" opacity=".15"/>
<rect x="93.800" y="496.500" width="16.600" height="16.200" rx="2" fill="url(#gbtn)" stroke="#9a9a9a" stroke-width=".9"/>
<path d="M98 504.600h8.200" stroke="#3566d8" stroke-width="1.700"/>
</g>
<g>
<linearGradient id="gh" x1="0" y1="0" x2="1" y2="0"><stop offset="0" stop-color="#fff"/><stop offset="1" stop-color="#f3f3f3"/></linearGradient>
<rect x="1124.200" y="328.800" width="130" height="47.500" rx="4" fill="#000" opacity=".28"/>
<rect x="1122.700" y="326.500" width="130" height="47.700" rx="4" fill="#f6f6f6" stroke="#5f5f5f" stroke-width="1"/>
<path d="M1123.300 330.500a3.500 3.500 0 0 1 3.500-3.500h60.500v46.700h-60.500a3.500 3.500 0 0 1-3.500-3.500z" fill="url(#gh)"/>
<path d="M1187.300 327v46.700" stroke="#bdbdbd" stroke-width="1"/>
<g transform="translate(1142 335.400)">
<circle cx="10.700" cy="5.500" r="5" fill="none" stroke="#2a7fc9" stroke-width="1.600"/>
<path d="M8.900 5.300A1.800 1.800 0 0 1 12.500 5.300V12C13.500 10.800 15.500 10.900 16 12.400C17 11.600 19 11.800 19.500 13.400C20.500 12.800 22.600 13.200 23 15C23.600 19 23.200 22 22.200 25L21 30H8.500C7 26 4 22.500 1 18.500C-.5 16.500 .5 14.200 3 14.600C5 15 7 16.500 8.900 18Z" fill="url(#gicon)"/>
</g>
<path d="M1218.400 364.800c-2.600-6.600-10.600-10-10.600-17.300a10.600 10.600 0 0 1 21.200 0c0 7.300-8 10.700-10.600 17.300z" fill="url(#gicon)"/>
<circle cx="1218.400" cy="347.100" r="3.700" fill="#fff"/>
</g>
<g font-family="'Liberation Sans',sans-serif" font-weight="bold">
<g stroke="#fff" stroke-width="4.600" stroke-linejoin="round" fill="#fff">
<text x="75" y="695.800" font-size="16" textLength="23" lengthAdjust="spacingAndGlyphs">Bai</text>
<ellipse cx="101.500" cy="682.300" rx="2.400" ry="3.100" transform="rotate(-20 101.500 682.300)"/><ellipse cx="106.500" cy="676.800" rx="2.400" ry="3.200"/><ellipse cx="113.300" cy="677.300" rx="2.400" ry="3.200"/><ellipse cx="117.700" cy="683.300" rx="2.400" ry="3.100" transform="rotate(20 117.700 683.300)"/>
<path d="M109.500 683.500c3.500 0 4.600 2.800 6.700 4.800 2.200 2 2.700 4.300 1.500 6.300-1.300 2-4 1.900-8.200 1.900s-6.900.100-8.200-1.900c-1.200-2-.7-4.300 1.500-6.300 2.100-2 3.200-4.800 6.700-4.800z"/>
<text x="121" y="695.500" font-size="12" font-family="'Noto Sans CJK SC',sans-serif" font-weight="900" textLength="23" lengthAdjust="spacingAndGlyphs">地图</text>
</g>
<text x="75" y="695.800" font-size="16" fill="#e10f0f" stroke="#e10f0f" stroke-width=".5" textLength="23" lengthAdjust="spacingAndGlyphs">Bai</text>
<g fill="#2b2fe0">
<ellipse cx="101.500" cy="682.300" rx="2.400" ry="3.100" transform="rotate(-20 101.500 682.300)"/><ellipse cx="106.500" cy="676.800" rx="2.400" ry="3.200"/><ellipse cx="113.300" cy="677.300" rx="2.400" ry="3.200"/><ellipse cx="117.700" cy="683.300" rx="2.400" ry="3.100" transform="rotate(20 117.700 683.300)"/>
<path d="M109.500 683.500c3.500 0 4.600 2.800 6.700 4.800 2.200 2 2.700 4.300 1.500 6.300-1.300 2-4 1.900-8.200 1.900s-6.900.100-8.200-1.900c-1.200-2-.7-4.300 1.500-6.300 2.100-2 3.200-4.800 6.700-4.800z"/></g>
<text x="109.500" y="695" font-size="9.500" fill="#fff" text-anchor="middle" letter-spacing="-.2">du</text>
<text x="121" y="695.500" font-size="12" fill="#e10f0f" font-family="'Noto Sans CJK SC',sans-serif" font-weight="900" textLength="23" lengthAdjust="spacingAndGlyphs">地图</text>
</g>
<rect x="70" y="704" width="490" height="14.500" fill="#fff" opacity=".55"/>
<text x="72" y="714.300" font-size="12" fill="#1a1a1a" stroke="#f5f3f0" stroke-width="2.500" paint-order="stroke" stroke-opacity=".85" textLength="485" lengthAdjust="spacingAndGlyphs">© 2019 Baidu - GS(2018)5572号 - 甲测资字1100930 - 京ICP证030173号 - Data © 长地万方</text>
</svg><!-- list header panel -->
<div class="panel" style="left:64px;top:752px;width:945px;height:106px"></div>
<div class="abs" style="left:64px;top:752px;width:110px;height:2px;background:#fd2d5e"></div>
<div class="abs" style="left:65px;top:806px;width:943px;height:1px;background:#ececec"></div>
<div class="abs" style="left:173px;top:753px;width:1px;height:53px;background:#ececec"></div>
<div class="abs" style="left:282px;top:753px;width:1px;height:53px;background:#ececec"></div>
<div class="abs" style="left:649px;top:753px;width:1px;height:53px;background:#ececec"></div>
<div class="abs" style="left:703px;top:753px;width:1px;height:53px;background:#ececec"></div>
<div class="abs" style="left:757px;top:753px;width:1px;height:53px;background:#ececec"></div>
<div class="abs" style="left:87px;top:770px;font-size:16px;line-height:22px;color:#fd2d5e">所有职位</div>
<div class="abs" style="left:196px;top:769px;font-size:16px;line-height:22px;color:#444">名企招聘</div>
<div class="abs" style="left:519px;top:771px;width:16px;height:16px;border:1px solid #e0e0e0;border-radius:2px;background:#fff"></div>
<div class="abs" style="left:542px;top:768px;font-size:14px;line-height:20px;color:#666">过滤已投递</div>
<svg class="abs" style="left:666px;top:771px" width="19" height="19" viewBox="0 0 19 19"><g fill="#fd2d5e"><rect x="0" y="0" width="8" height="8"/><rect x="10" y="0" width="8" height="8"/><rect x="0" y="10" width="8" height="8"/><rect x="10" y="10" width="8" height="8"/></g></svg>
<svg class="abs" style="left:719px;top:771px" width="23" height="19" viewBox="0 0 23 19"><g fill="#999"><rect x="0" y="0" width="22" height="4"/><rect x="0" y="7.5" width="22" height="4"/><rect x="0" y="15" width="22" height="4"/></g></svg>
<div class="abs" style="left:796px;top:770px;font-size:14px;line-height:22px;color:#666;font-size:15px"><span style="color:#fd2d5e">1</span>/10页</div>
<div class="abs" style="left:858px;top:771px;font-size:13px;line-height:22px;color:#888;font-family:'Liberation Mono',monospace">&gt;</div>

<div class="abs" style="left:84px;top:820px;font-size:14px;line-height:20px;color:#666">排序方式<span style="display:inline-block;width:14px;text-align:center">:</span></div>
<div class="abs" style="left:165px;top:817px;width:85px;height:26px;border:1px solid #e6e6e6;border-radius:3px;font-size:12px;line-height:25px;color:#fd2d5e;padding-left:12px">综合排序<svg style="position:absolute;left:62px;top:7px" width="8" height="10" viewBox="0 0 8 10"><path d="M2.7 0h2.6v5H8L4 10 0 5h2.7z" fill="#fd2d5e"/></svg></div>
<div class="abs" style="left:270px;top:817px;width:85px;height:26px;border:1px solid #e6e6e6;border-radius:3px;font-size:12px;line-height:25px;color:#444;padding-left:12px">更新时间<svg style="position:absolute;left:62px;top:7px" width="8" height="10" viewBox="0 0 8 10"><path d="M2.7 0h2.6v5H8L4 10 0 5h2.7z" fill="#bbb"/></svg></div>

<!-- job card -->
<div class="panel" style="left:64px;top:868px;width:945px;height:120px"></div>
<div class="abs" style="left:81px;top:892px;width:15px;height:15px;border:1px solid #e0e0e0;border-radius:2px;background:#fff"></div>
<div class="abs" style="left:104px;top:888px;font-size:16px;line-height:24px;color:#2f7ac0">运营专员</div>
<div class="abs" style="left:375px;top:887px;font-size:16px;line-height:24px;color:#333">南京网眼软件有限公司</div>
<svg class="abs" style="left:540px;top:890px" width="17" height="20" viewBox="0 0 17 20"><path d="M7.840 1L15.600 4.500V11Q15 15.500 7.840 18.200Q.600 15.500 0.100 11V4.500Z" fill="#9ccbff"/><text x="7.840" y="13" font-size="8.500" font-weight="bold" text-anchor="middle" fill="#fff" font-family="'Noto Sans CJK SC',sans-serif">企</text></svg>
<svg class="abs" style="left:559px;top:889px" width="23" height="23" viewBox="0 0 23 23"><path d="M2.200 6.100L6.500 9.200L10.850 2L15.700 9.200L19.700 6.100L17.300 14.700H4.700Z" fill="#f9b62e"/><path d="M10.850 2L15.700 9.200L19.700 6.100L17.300 14.700H10.850Z" fill="#ffc93c"/><circle cx="2.200" cy="6.100" r="1.200" fill="#f9b62e"/><circle cx="10.850" cy="2" r="1.300" fill="#f9b62e"/><circle cx="19.700" cy="6.100" r="1.200" fill="#ffc93c"/><rect x="4.700" y="16" width="12.600" height="1.900" fill="#f9b62e"/><text x="16.700" y="19.300" font-size="9" text-anchor="middle" fill="#e8690b" stroke="#fff" stroke-width="2.200" paint-order="stroke" stroke-linejoin="round" font-family="'Noto Sans CJK SC',sans-serif">月</text></svg>
<div class="abs" style="left:670px;top:887px;font-size:16px;line-height:24px;color:#fd2d5e">10K以上/月</div>
<div class="abs" style="left:867px;top:886px;font-size:14px;line-height:20px;color:#666;letter-spacing:.25px">2019-11-19</div>
<svg class="abs" style="left:955px;top:887px" width="20" height="20" viewBox="0 0 20 20"><circle cx="10" cy="10" r="9.500" fill="#f0f0f0" stroke="#dcdcdc"/><path d="M5.500 12l4.500-4.500 4.500 4.500" fill="none" stroke="#aaa" stroke-width="1.400"/></svg>
<div class="abs" style="left:848px;top:910px;width:1px;height:60px;background:#e8e8e8"></div>
<div class="abs" style="left:893px;top:927px;width:72px;height:44px;border:1px solid #fd2d5e;border-radius:6px;font-size:16px;line-height:43px;color:#fd2d5e;text-align:center">申请</div>
<div class="abs" style="left:104px;top:925px;font-size:14px;line-height:20px;color:#666">学历<span style="display:inline-block;width:14px;text-align:center">:</span>学历不限<span style="margin:0 11px 0 13px;color:#888">|</span>经验<span style="display:inline-block;width:14px;text-align:center">:</span>经验不限<span style="margin:0 11px 0 13px;color:#888">|</span>职位性质<span style="display:inline-block;width:14px;text-align:center">:</span>兼职<span style="margin:0 11px 0 13px;color:#888">|</span>人数<span style="display:inline-block;width:14px;text-align:center">:</span>1人<span style="margin:0 11px 0 13px;color:#888">|</span>地点<span style="display:inline-block;width:14px;text-align:center">:</span>江苏/南京/玄武区</div>

<svg class="abs" style="left:0;top:950px" width="600" height="12" viewBox="0 950 600 12"><g fill="#fff" stroke="#dcdcdc" stroke-width="1"><path d="M105.5 970V958.500a2 2 0 0 1 2-2H152L158.5 966V970"/><path d="M178.5 970V958.500a2 2 0 0 1 2-2H225L231.5 966V970"/><path d="M251.5 970V958.500a2 2 0 0 1 2-2H286L292.5 966V970"/><path d="M312.5 970V958.500a2 2 0 0 1 2-2H370L376.5 966V970"/><path d="M397.5 970V958.500a2 2 0 0 1 2-2H456L462.5 966V970"/></g></svg>
<!-- sidebar -->
<div class="panel" style="left:1034px;top:752px;width:230px;height:99px"></div>
<div class="abs" style="left:1035px;top:753px;width:228px;height:47px;background:#f8f8f8;border-bottom:1px solid #ececec"></div>
<div class="abs" style="left:1045px;top:769px;width:4px;height:15px;background:#fd2d5e"></div>
<div class="abs" style="left:1054px;top:766px;font-size:16px;line-height:22px;color:#444">推荐职位</div>
<div class="abs" style="left:1054px;top:816px;font-size:12px;line-height:18px;color:#444">暂无相关职位！</div>

<div class="panel" style="left:1034px;top:876px;width:230px;height:120px"></div>
<div class="abs" style="left:1035px;top:877px;width:228px;height:47px;background:#f8f8f8;border-bottom:1px solid #ececec"></div>
<div class="abs" style="left:1045px;top:893px;width:4px;height:15px;background:#fd2d5e"></div>
<div class="abs" style="left:1054px;top:890px;font-size:16px;line-height:22px;color:#444">紧急招聘</div>
<div class="abs" style="left:1045px;top:935px;font-size:14px;line-height:20px;color:#222">电子电路设计师<span style="color:#999;margin-left:7px">江苏/南京/雨...</span></div>
</body>
</html>
